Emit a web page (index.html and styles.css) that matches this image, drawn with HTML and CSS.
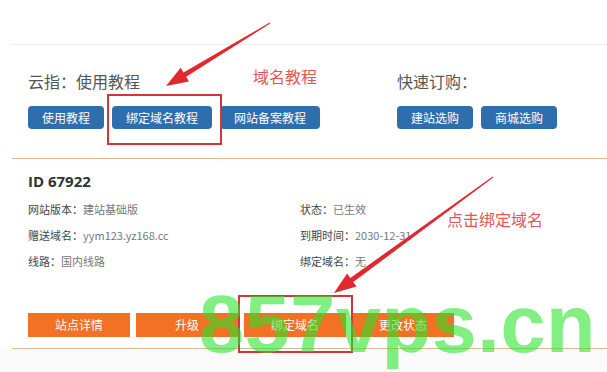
FILE: index.html
```html
<!DOCTYPE html>
<html lang="zh-CN">
<head>
<meta charset="utf-8">
<title>使用教程</title>
<link rel="stylesheet" href="styles.css">
</head>
<body>
<div class="page">
  <div class="top-space"></div>

  <section class="guide">
    <div class="group group-left">
      <h2 class="group-title">云指：使用教程</h2>
      <div class="btns">
        <a class="btn-blue">使用教程</a>
        <a class="btn-blue">绑定域名教程</a>
        <a class="btn-blue">网站备案教程</a>
      </div>
    </div>
    <div class="group group-right">
      <h2 class="group-title">快速订购：</h2>
      <div class="btns">
        <a class="btn-blue">建站选购</a>
        <a class="btn-blue">商城选购</a>
      </div>
    </div>
  </section>

  <section class="site-card">
    <h3 class="site-id">ID 67922</h3>
    <div class="info-grid">
      <div class="info"><span class="k">网站版本：</span><span class="v">建站基础版</span></div>
      <div class="info"><span class="k">状态：</span><span class="v">已生效</span></div>
      <div class="info"><span class="k">赠送域名：</span><span class="v">yym123.yz168.cc</span></div>
      <div class="info"><span class="k">到期时间：</span><span class="v">2030-12-31</span></div>
      <div class="info"><span class="k">线路：</span><span class="v">国内线路</span></div>
      <div class="info"><span class="k">绑定域名：</span><span class="v">无</span></div>
    </div>
    <div class="actions">
      <a class="btn-orange">站点详情</a>
      <a class="btn-orange">升级</a>
      <a class="btn-orange">绑定域名</a>
      <a class="btn-orange">更改状态</a>
    </div>
  </section>

  <div class="footer-band"></div>

  <!-- annotations drawn over the screenshot -->
  <div class="note note-guide">域名教程</div>
  <div class="note note-bind">点击绑定域名</div>
  <div class="mark mark-guide"></div>
  <div class="mark mark-bind"></div>
  <svg class="arrows" width="607" height="372" viewBox="0 0 607 372">
    <polygon points="270.26,23.43 186.1,76.74 188.94,81.44 166,86 180.66,67.76 183.5,72.46 269.74,22.57" fill="#e0282e"/>
    <polygon points="493.29,177.4 353.27,282.02 356.51,286.46 334,293 347.09,273.54 350.33,277.98 492.71,176.6" fill="#e0282e"/>
  </svg>
  <div class="watermark">857vps.cn</div>
</div>
</body>
</html>
```

FILE: styles.css
```css
html, body {
  margin: 0;
  padding: 0;
  background: #ffffff;
}

.page {
  position: relative;
  width: 607px;
  height: 372px;
  overflow: hidden;
  font-family: "Noto Sans CJK SC", sans-serif;
  display: flex;
  flex-direction: column;
}

.top-space {
  height: 44px;
  flex: none;
}

.guide {
  margin-left: 12px;
  border-top: 1px solid #ebebeb;
  padding: 26px 0 29px 16px;
  display: flex;
  flex: none;
}

.group-left {
  width: 369px;
}

.group-title {
  margin: 0 0 15px;
  font-size: 16px;
  line-height: 20px;
  font-weight: 400;
  color: #555555;
}

.btns {
  display: flex;
  gap: 8px;
}

.btn-blue {
  display: block;
  height: 23px;
  line-height: 23px;
  padding: 0 14px;
  border-radius: 4px;
  background: #2f6ead;
  color: #ffffff;
  font-size: 12px;
}

.site-card {
  margin-left: 12px;
  border-top: 1px solid #e2b893;
  border-bottom: 1px solid #e2b893;
  padding: 12px 0 11px 16px;
  flex: none;
}

.site-id {
  margin: 0;
  font-family: "Open Sans", "Noto Sans CJK SC", sans-serif;
  font-size: 15px;
  line-height: 20px;
  font-weight: 700;
  color: #333333;
}

.info-grid {
  margin-top: 5px;
  display: grid;
  grid-template-columns: 272px 1fr;
  grid-auto-rows: 26px;
}

.info {
  font-size: 11px;
  line-height: 26px;
}

.info .k {
  color: #444444;
}

.info .v {
  color: #777777;
}

.actions {
  margin-top: 39px;
  display: flex;
  gap: 6px;
}

.btn-orange {
  display: block;
  width: 102px;
  height: 24px;
  line-height: 24px;
  text-align: center;
  background: #f27124;
  color: #ffffff;
  font-size: 12px;
}

.footer-band {
  flex: 1;
  background: #fafafa;
}

/* annotations */
.note {
  position: absolute;
  font-size: 16px;
  line-height: 20px;
  color: #e25656;
  white-space: nowrap;
}

.note-guide {
  left: 253px;
  top: 66px;
}

.note-bind {
  left: 447px;
  top: 209px;
}

.mark {
  position: absolute;
  box-sizing: border-box;
  border: 2px solid #d6343c;
}

.mark-guide {
  left: 107px;
  top: 94px;
  width: 115px;
  height: 51px;
}

.mark-bind {
  left: 238px;
  top: 295px;
  width: 115px;
  height: 58px;
}

.arrows {
  position: absolute;
  left: 0;
  top: 0;
}

.watermark {
  position: absolute;
  left: 199px;
  top: 284px;
  font-family: "Liberation Sans", Arial, sans-serif;
  font-weight: 700;
  font-size: 81px;
  line-height: 1;
  letter-spacing: 0.6px;
  color: rgba(40, 228, 40, 0.58);
  white-space: nowrap;
}
```
